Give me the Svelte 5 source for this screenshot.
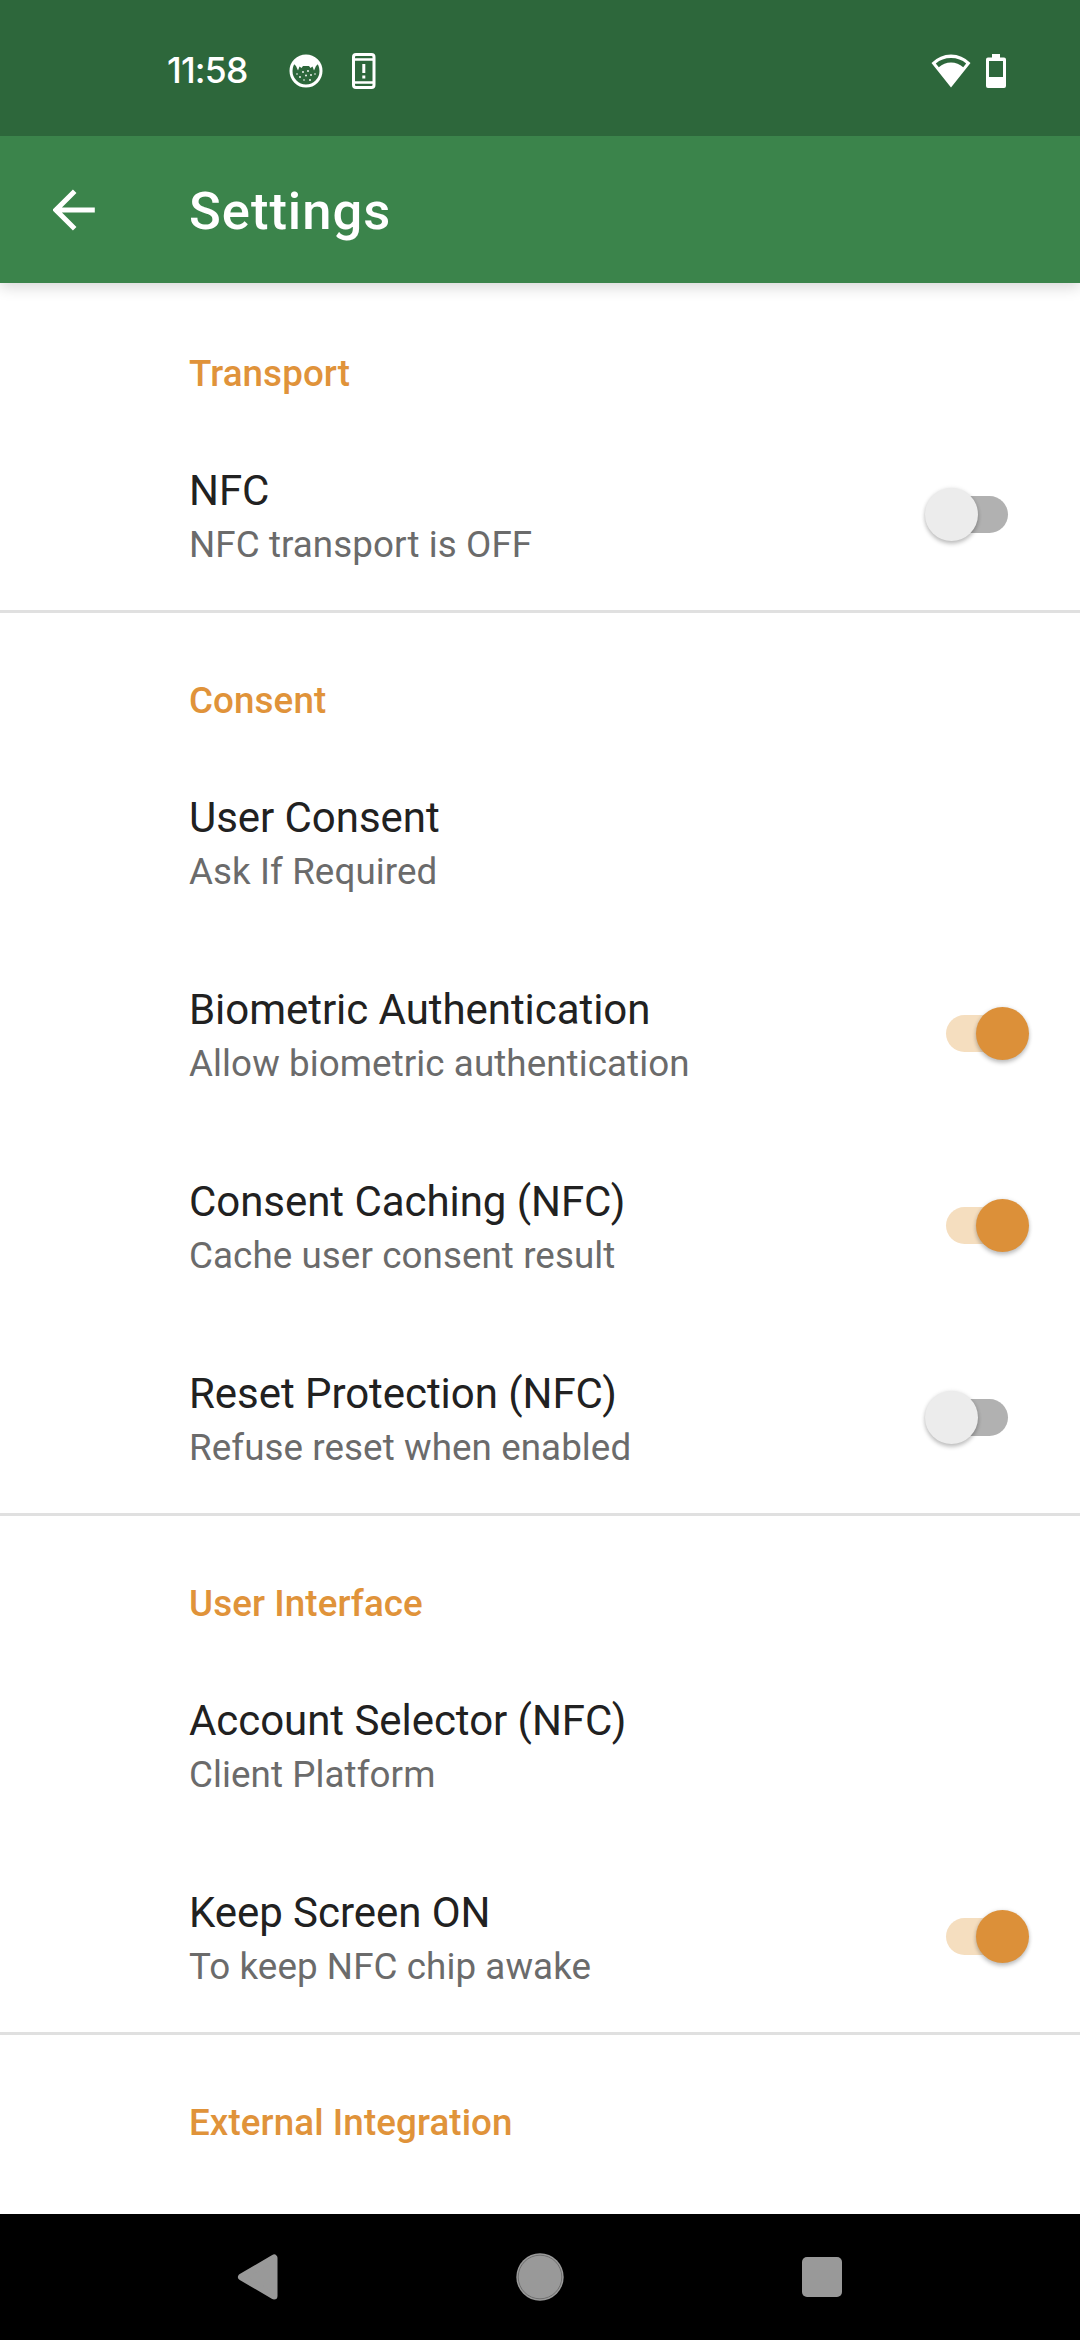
<script>
  const sections = [
    { title: 'Transport', items: [{ title: 'NFC', summary: 'NFC transport is OFF', on: false }] },
    {
      title: 'Consent',
      items: [
        { title: 'User Consent', summary: 'Ask If Required' },
        { title: 'Biometric Authentication', summary: 'Allow biometric authentication', on: true },
        { title: 'Consent Caching (NFC)', summary: 'Cache user consent result', on: true },
        { title: 'Reset Protection (NFC)', summary: 'Refuse reset when enabled', on: false },
      ],
    },
    {
      title: 'User Interface',
      items: [
        { title: 'Account Selector (NFC)', summary: 'Client Platform' },
        { title: 'Keep Screen ON', summary: 'To keep NFC chip awake', on: true },
      ],
    },
    { title: 'External Integration', items: [] },
  ];
</script>

<div class="screen">
  <header class="status">
    <span class="time">11:58</span>
    <svg class="cat" viewBox="0 0 34 34" width="34" height="34">
      <circle cx="17" cy="17" r="15" fill="none" stroke="#fff" stroke-width="3" />
      <path d="M4 9Q9 1.500 17 1.500T30 9L27 12 25 16.500 23.500 12.500 21.500 14 20 12H14L12.500 14 10.500 12.500 9 16.500 7 12Z" fill="#fff" />
      <g fill="#fff">
        <circle cx="8" cy="20" r=".8" /><circle cx="14" cy="18" r=".9" /><circle cx="19" cy="17" r=".9" />
        <circle cx="26" cy="20" r=".8" /><circle cx="11" cy="23" r=".9" /><circle cx="17" cy="21.500" r=".9" />
        <circle cx="22" cy="21" r=".9" /><circle cx="15" cy="26" r=".8" /><circle cx="21" cy="26" r=".9" />
      </g>
    </svg>
    <svg class="phone" viewBox="0 0 24 36" width="24" height="36">
      <rect x="1.500" y="1.500" width="20.500" height="33" rx="2.500" fill="none" stroke="#fff" stroke-width="3" />
      <path d="M3 6.500H21M3 29.500H21" stroke="#fff" stroke-width="2.500" />
      <path d="M10.300 11h3v9h-3zM10.300 22.500h3v3h-3z" fill="#fff" />
    </svg>
    <span class="grow"></span>
    <svg class="wifi" viewBox="0 0 40 34" width="40" height="34">
      <path fill="#fff" fill-rule="evenodd" d="M.5 9Q9 .5 20 .5T39.500 9L20 33.500ZM4.800 9.500L7.800 13.300Q13 8.500 20 8.500T32.200 13.300L35.200 9.500Q29 4 20 4T4.800 9.500Z" />
    </svg>
    <svg class="battery" viewBox="0 0 20 34" width="20" height="34">
      <path fill="#fff" fill-rule="evenodd" d="M6 0h8v3.500h4a2 2 0 0 1 2 2V32a2 2 0 0 1-2 2H2a2 2 0 0 1-2-2V5.500a2 2 0 0 1 2-2h4zM3 7v16h14V7z" />
    </svg>
  </header>

  <div class="toolbar">
    <svg viewBox="0 0 42 42" width="42" height="42">
      <path d="M41.800 21H4M21.700 2.200L2.900 21 21.700 39.800" fill="none" stroke="#fff" stroke-width="5" />
    </svg>
    <h1>Settings</h1>
  </div>

  <main>
    {#each sections as section}
      <section>
        <h2>{section.title}</h2>
        {#each section.items as item}
          <div class="row">
            <div class="text">
              <div class="title">{item.title}</div>
              <div class="summary">{item.summary}</div>
            </div>
            {#if item.on !== undefined}
              <div class="switch" class:on={item.on}><span class="thumb"></span></div>
            {/if}
          </div>
        {/each}
      </section>
    {/each}
  </main>

  <nav>
    <svg viewBox="0 0 42 48" width="42" height="48">
      <path d="M37 5V43L4.500 24Z" fill="#999" stroke="#999" stroke-width="7" stroke-linejoin="round" />
    </svg>
    <svg viewBox="0 0 48 48" width="48" height="48">
      <circle cx="24" cy="24" r="23.700" fill="#999" />
      <circle cx="24" cy="24" r="21.800" fill="none" stroke="#666" stroke-width=".8" />
    </svg>
    <svg viewBox="0 0 42 42" width="42" height="42">
      <rect x="1" y="1" width="40" height="40" rx="5" fill="#999" />
    </svg>
  </nav>
</div>

<style>
  .screen {
    width: 1080px;
    height: 2340px;
    display: flex;
    flex-direction: column;
    overflow: hidden;
    background: #fff;
    font-family: Roboto, sans-serif;
  }
  svg {
    display: block;
    flex: none;
  }
  .status {
    flex: none;
    box-sizing: border-box;
    height: 136px;
    padding: 5px 74px 0 167px;
    display: flex;
    align-items: center;
    background: #2d673b;
    color: #fff;
    z-index: 2;
  }
  .time {
    width: 122px;
    font: 550 35.5px/44px Inter, sans-serif;
    letter-spacing: -0.8px;
  }
  .cat {
    margin-right: 29px;
  }
  .grow {
    flex: 1;
  }
  .wifi {
    margin-right: 15px;
  }
  .toolbar {
    flex: none;
    box-sizing: border-box;
    height: 147px;
    padding-left: 53px;
    display: flex;
    align-items: center;
    gap: 94px;
    background: #3b844b;
    color: #fff;
    z-index: 1;
    box-shadow: 0 4px 14px rgba(0, 0, 0, 0.16);
  }
  h1 {
    margin: 3px 0 0;
    font-size: 52.5px;
    font-weight: 500;
    line-height: 62px;
    letter-spacing: 1px;
  }
  main {
    flex: 1;
    min-height: 0;
    overflow: hidden;
  }
  section + section {
    box-shadow: inset 0 3px #e0e0e0;
  }
  h2 {
    box-sizing: border-box;
    height: 135px;
    margin: 0;
    padding: 66px 0 0 189px;
    color: #e0933a;
    font-size: 36.75px;
    font-weight: 500;
    line-height: 50px;
    letter-spacing: 0.1px;
  }
  .row {
    box-sizing: border-box;
    height: 192px;
    padding: 0 72px 0 189px;
    display: flex;
    justify-content: space-between;
    align-items: center;
  }
  .text {
    padding-top: 5px;
  }
  .title {
    color: #212121;
    font-size: 42px;
    line-height: 56px;
    letter-spacing: -0.05px;
  }
  .summary {
    color: #6b6b6b;
    font-size: 36.75px;
    line-height: 51px;
    letter-spacing: 0.08px;
  }
  .switch {
    width: 62px;
    height: 37px;
    display: flex;
    align-items: center;
    border-radius: 19px;
    background: #b1b1b1;
  }
  .thumb {
    flex: none;
    width: 53px;
    height: 53px;
    margin-left: -21px;
    border-radius: 50%;
    background: #ececec;
    box-shadow: 0 3px 4px rgba(0, 0, 0, 0.22), 0 0 4px rgba(0, 0, 0, 0.1);
  }
  .on {
    background: #f5debf;
  }
  .on .thumb {
    margin-left: 30px;
    background: #dc9039;
  }
  nav {
    flex: none;
    box-sizing: border-box;
    height: 126px;
    padding: 0 237px;
    display: flex;
    justify-content: space-between;
    align-items: center;
    background: #000;
  }
</style>
